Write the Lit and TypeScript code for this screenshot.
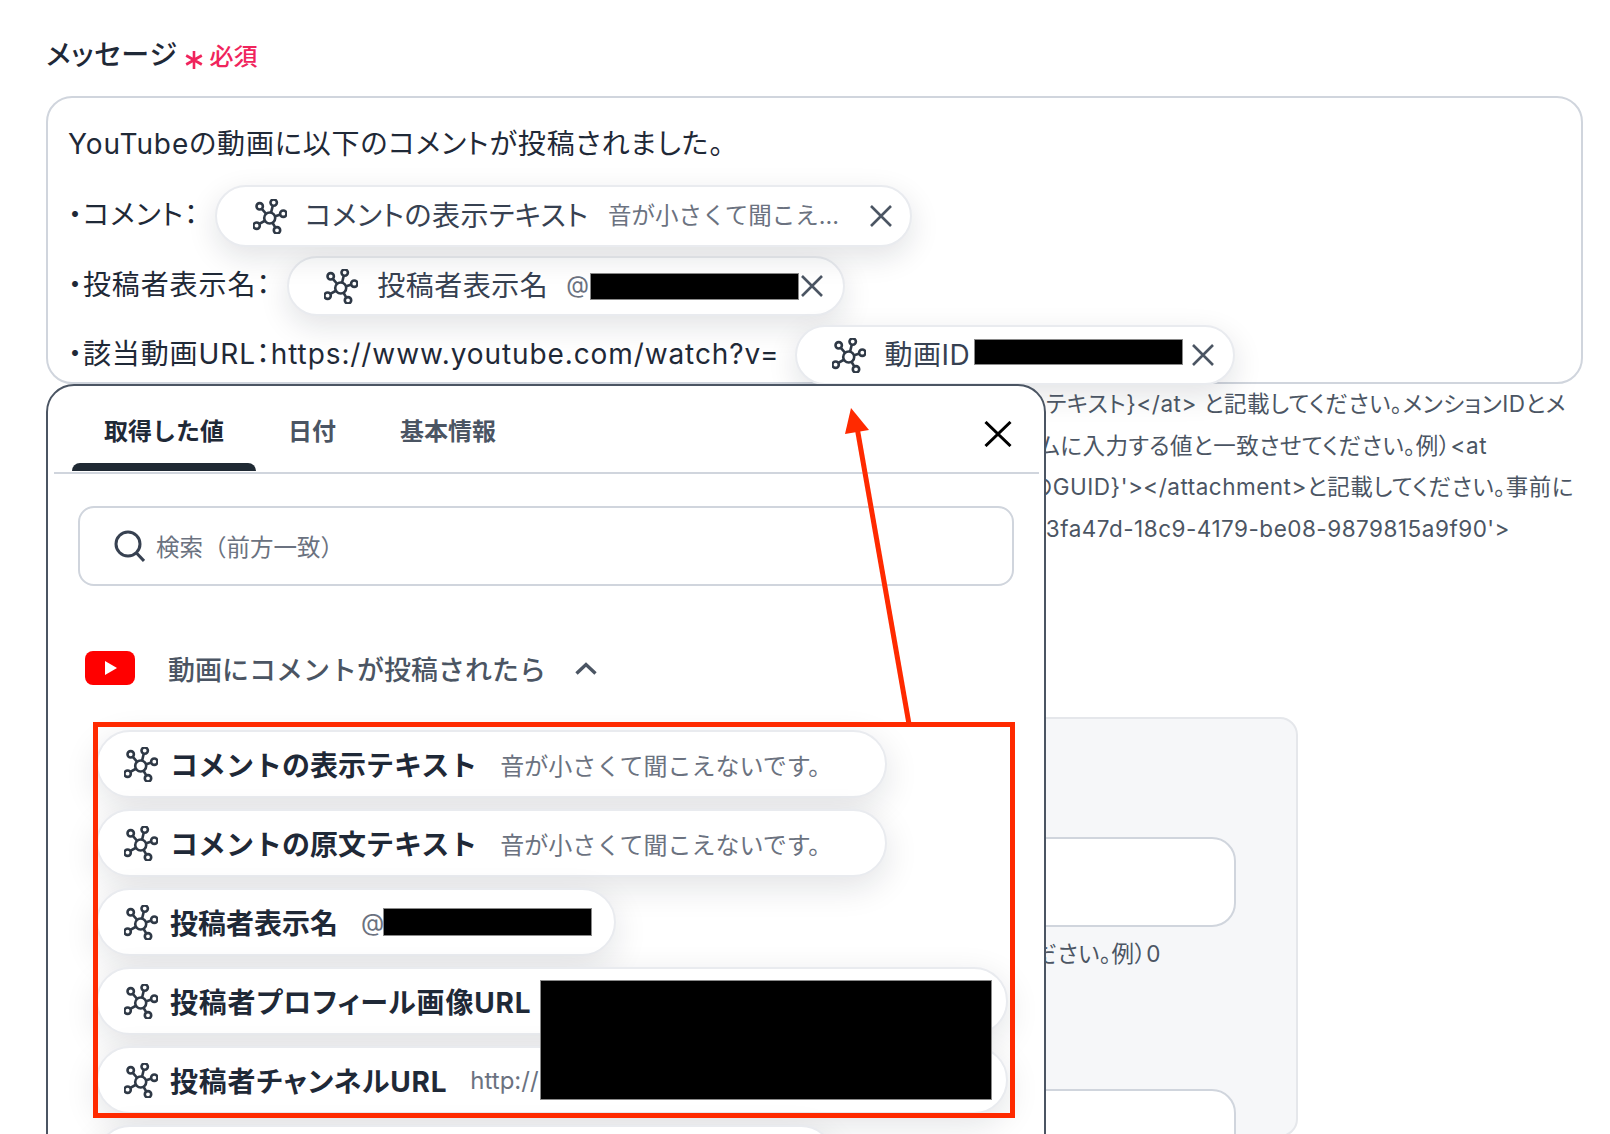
import { LitElement, html, css, svg } from "lit";
import { customElement } from "lit/decorators.js";

const netIcon = html`<svg class="net" viewBox="0 0 34 35" fill="none" stroke="currentColor" stroke-width="2.6">
  ${svg`<path d="M16.7 19 6.7 7.3M16.7 19 20.7 3M16.7 19 30 14.7M16.7 19 24 31.3M16.7 19 3.3 26.7"/>
  <circle cx="16.7" cy="19" r="5.5" fill="#fff"/>
  <circle cx="6.7" cy="7.3" r="3.2" fill="#fff"/>
  <circle cx="20.7" cy="3.6" r="3.2" fill="#fff"/>
  <circle cx="30.3" cy="14.7" r="3.2" fill="#fff"/>
  <circle cx="24" cy="31.3" r="3.2" fill="#fff"/>
  <circle cx="3.6" cy="26.7" r="3.2" fill="#fff"/>`}
</svg>`;

const xIcon = html`<svg class="x" viewBox="0 0 24 22" fill="none" stroke="currentColor" stroke-width="2.6">${svg`<path d="M2 1 22 21M22 1 2 21"/>`}</svg>`;

interface Row { name: string; sub?: string; width: number; black?: boolean; ls?: number }
const rows: Row[] = [
  { name: "コメントの表示テキスト", sub: "音が小さくて聞こえないです。", width: 791 },
  { name: "コメントの原文テキスト", sub: "音が小さくて聞こえないです。", width: 791 },
  { name: "投稿者表示名", sub: "@", width: 520, black: true },
  { name: "投稿者プロフィール画像URL", width: 912, ls: 0.8 },
  { name: "投稿者チャンネルURL", sub: "http://", width: 912, ls: 0.8 },
  { name: "", width: 739 },
];

const help = [
  { t: "テキスト}</at> と記載してください。メンションIDとメ", r: 17 },
  { t: "ムに入力する値と一致させてください。例）<at", r: 96 },
  { t: "のGUID}'></attachment>と記載してください。事前に", r: 9 },
  { t: "d3fa47d-18c9-4179-be08-9879815a9f90'>", r: 73 },
];

@customElement("app-root")
export class AppRoot extends LitElement {
  static styles = css`
    :host {
      display: block; position: relative; width: 1610px; height: 1134px; overflow: hidden;
      background: #fff; color: #1f2937;
      font-family: "Inter", "Noto Sans CJK JP", sans-serif;
    }
    .page { padding: 38px 27px 0 46px; }
    .label { display: flex; align-items: center; height: 34px; font-size: 28px; line-height: 34px; margin-bottom: 24px; font-feature-settings: "palt"; letter-spacing: 0.8px; font-weight: 500; }
    .req { display: flex; align-items: center; color: #f0245c; font-size: 24px; margin-left: 7px; margin-top: 3px; letter-spacing: 0; font-feature-settings: normal; }
    .ast { width: 18px; height: 18px; margin-right: 7px; margin-top: 7px; }
    .box {
      box-sizing: border-box; height: 288px; border: 2px solid #d0d5dd; border-radius: 26px;
      padding: 25px 0 0 20px; font-size: 28px; letter-spacing: 0.9px; color: #1f2937;
      font-feature-settings: "palt";
    }
    .line1 { height: 42px; line-height: 42px; margin-bottom: 20px; }
    .line { display: flex; align-items: center; white-space: nowrap; margin-bottom: 9px; }
    .line .lab { margin-top: -6px; }
    .pill {
      box-sizing: border-box; display: flex; align-items: center; background: #fff;
      border: 2px solid #e9ebef; border-radius: 32px; height: 60px; letter-spacing: 0.5px;
      box-shadow: 0 10px 30px rgba(17, 24, 39, 0.12); color: #374151; white-space: nowrap;
      margin-left: 16px; flex: none;
    }
    .pill .t, .pill .sub { margin-bottom: 4px; }
    .net { width: 34px; height: 35px; flex: none; color: #2f3946; }
    .x { width: 24px; height: 22px; flex: none; color: #4b5563; margin-left: auto; }
    .sub { font-size: 24px; color: #6b7280; letter-spacing: 0; font-feature-settings: normal; }
    .black { background: #000; box-shadow: 0 0 0 1px #8a8a8a; flex: none; }
    .p1 { width: 697px; height: 62px; padding: 0 17px 0 36px; position: relative; }
    .p1 .t { margin-left: 18px; width: 287px; }
    .p1 .sub { margin-left: 16px; font-size: 23.5px; }
    .p2 { width: 558px; padding: 0 19px 0 35px; }
    .p2 .t { margin-left: 19px; width: 170px; }
    .p2 .sub { margin-left: 19px; font-size: 23.5px; }
    .p2 .black { width: 207px; height: 25px; margin-left: 2px; }
    .p3 { width: 440px; padding: 0 18px 0 35px; }
    .p3 .t { margin-left: 18px; }
    .p3 .black { width: 207px; height: 24px; margin-left: 5px; margin-top: -6px; }
    .help { margin-top: -1px; font-size: 22.5px; line-height: 41.5px; color: #4b5563; text-align: right; white-space: nowrap; font-feature-settings: "palt"; letter-spacing: 0.5px; }
    .card {
      box-sizing: border-box; width: 1252px; height: 420px; margin-top: 168px; padding: 118px 60px 0 0;
      background: #f6f7f9; border: 2px solid #e5e7eb; border-radius: 18px;
    }
    .input { box-sizing: border-box; height: 90px; background: #fff; border: 2px solid #d0d5dd; border-radius: 24px; }
    .hint { font-size: 22.5px; line-height: 50px; margin-top: 2px; color: #4b5563; text-align: right; padding-right: 75px; margin-bottom: 110px; font-feature-settings: "palt"; letter-spacing: 0.5px; }
    .input.tall { height: 140px; }

    .panel {
      position: absolute; left: 46px; top: 384px; width: 1000px; height: 800px; box-sizing: border-box;
      background: #fff; border: 2px solid #4b5563; border-radius: 28px; padding: 0 5px 0 6px;
    }
    .tabs { display: flex; align-items: center; height: 88px; padding: 0 0 0 18px; border-bottom: 2px solid #d0d5dd; box-sizing: border-box; position: relative; }
    .tab { padding: 0 32px; font-size: 24px; font-weight: 700; color: #4b5563; }
    .tab.on { color: #1f2937; position: relative; }
    .tab.on::after {
      content: ""; position: absolute; left: 0; right: 0; bottom: -24px; height: 8px;
      background: #1f2933; border-radius: 8px 8px 0 0;
    }
    .close { margin-left: auto; margin-right: 27px; width: 28px; height: 26px; color: #000; display: block; margin-top: 10px; }
    .search {
      box-sizing: border-box; display: flex; align-items: center; margin: 32px 25px 0 24px; height: 80px;
      border: 2px solid #d0d5dd; border-radius: 16px; padding-left: 34px; color: #6b7280; font-size: 23.5px;
    }
    .sicon { width: 31px; height: 32px; margin-right: 11px; color: #374151; }
    .head { display: flex; align-items: center; margin: 65px 0 0 31px; height: 34px; font-size: 27px; font-weight: 500; color: #4b5563; }
    .yt { width: 50px; height: 34px; margin-right: 33px; }
    .chev { width: 22px; height: 13px; margin-left: 29px; color: #4b5563; }
    .list { display: flex; flex-direction: column; gap: 11px; margin: 45px 0 0 42px; }
    .row {
      box-sizing: border-box; display: flex; align-items: center; height: 68px; background: #fff;
      border: 2px solid #e9ebef; border-radius: 34px; padding-left: 26px; white-space: nowrap;
      box-shadow: 0 10px 34px rgba(17, 24, 39, 0.12);
    }
    .row .n { margin-left: 12px; font-size: 28px; font-weight: 700; color: #1f2937; }
    .row .n.tight { font-feature-settings: "palt"; }
    .row .sub { margin-left: 23px; }
    .row .black { width: 207px; height: 26px; }

    .redbig { position: absolute; left: 541px; top: 981px; width: 450px; height: 118px; }
    .redbox { position: absolute; left: 93px; top: 722px; width: 922px; height: 396px; box-sizing: border-box; border: 5px solid #ff2a00; }
    .arrow { position: absolute; left: 0; top: 0; width: 1610px; height: 1134px; pointer-events: none; }
  `;

  render() {
    return html`
      <div class="page">
        <div class="label">メッセージ
          <span class="req">
            <svg class="ast" viewBox="0 0 18 18" fill="none" stroke="currentColor" stroke-width="2.6">${svg`<path d="M9 0v18M1.2 4.5l15.6 9M16.8 4.5l-15.6 9"/>`}</svg>
            必須
          </span>
        </div>
        <div class="box">
          <div class="line1">YouTubeの動画に以下のコメントが投稿されました。</div>
          <div class="line">
            <span class="lab">・コメント：</span>
            <div class="pill p1">${netIcon}<span class="t">コメントの表示テキスト</span><span class="sub">音が小さくて聞こえ...</span>${xIcon}</div>
          </div>
          <div class="line">
            <span class="lab">・投稿者表示名：</span>
            <div class="pill p2">${netIcon}<span class="t">投稿者表示名</span><span class="sub">@</span><span class="black"></span>${xIcon}</div>
          </div>
          <div class="line">
            <span class="lab">・該当動画URL：https://www.youtube.com/watch?v=</span>
            <div class="pill p3">${netIcon}<span class="t">動画ID</span><span class="black"></span>${xIcon}</div>
          </div>
        </div>
        <div class="help">
          ${help.map((h) => html`<div style="padding-right:${h.r}px">${h.t}</div>`)}
        </div>
        <div class="card">
          <div class="input"></div>
          <div class="hint">ださい。例）0</div>
          <div class="input tall"></div>
        </div>
      </div>

      <div class="panel">
        <div class="tabs">
          <div class="tab on">取得した値</div>
          <div class="tab">日付</div>
          <div class="tab">基本情報</div>
          <svg class="close" viewBox="0 0 28 26" fill="none" stroke="currentColor" stroke-width="3">${svg`<path d="M1.5 1 26.5 25M26.5 1 1.5 25"/>`}</svg>
        </div>
        <div class="search">
          <svg class="sicon" viewBox="0 0 31 32" fill="none" stroke="currentColor" stroke-width="3">${svg`<circle cx="14" cy="14" r="12"/><path d="M22.5 23 30 31"/>`}</svg>
          検索（前方一致）
        </div>
        <div class="head">
          <svg class="yt" viewBox="0 0 50 34">${svg`<rect width="50" height="34" rx="8" fill="#f00"/><path d="M20 10v14l12-7z" fill="#fff"/>`}</svg>
          動画にコメントが投稿されたら
          <svg class="chev" viewBox="0 0 22 13" fill="none" stroke="currentColor" stroke-width="3.4">${svg`<path d="M1.5 11.5 11 2.5l9.5 9"/>`}</svg>
        </div>
        <div class="list">
          ${rows.map((r) => html`
            <div class="row" style="width:${r.width}px">
              ${netIcon}
              <span class="n ${r.ls ? "tight" : ""}" style="letter-spacing:${r.ls ?? 0}px">${r.name}</span>
              ${r.sub ? html`<span class="sub">${r.sub}</span>` : ""}
              ${r.black ? html`<span class="black"></span>` : ""}
            </div>`)}
        </div>
      </div>

      <div class="black redbig"></div>
      <div class="redbox"></div>
      <svg class="arrow" viewBox="0 0 1610 1134">${svg`
        <path d="M909 724 857.5 430" stroke="#ff2a00" stroke-width="5" fill="none"/>
        <path d="M851 408 845 434 869 430z" fill="#ff2a00"/>`}</svg>
    `;
  }
}
